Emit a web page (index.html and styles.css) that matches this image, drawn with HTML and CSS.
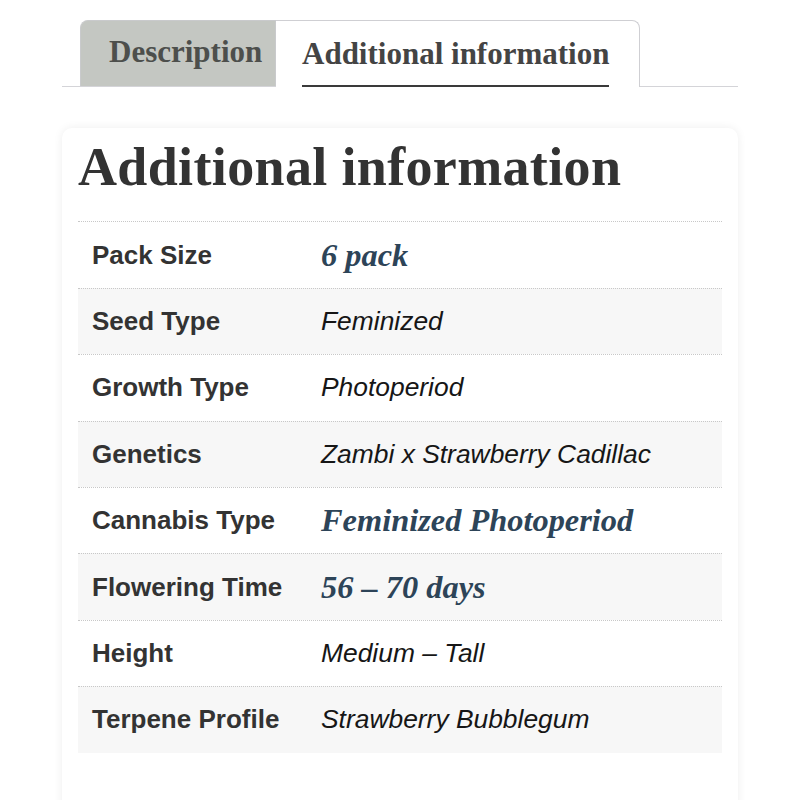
FILE: index.html
```html
<!DOCTYPE html>
<html lang="en">
<head>
<meta charset="utf-8">
<title>Additional information</title>
<link rel="stylesheet" href="styles.css">
</head>
<body>
<div class="tabs">
  <div class="tab tab-inactive"><span class="tab-label">Description</span></div>
  <div class="tab tab-active"><span class="tab-label">Additional information</span></div>
</div>
<section class="card">
  <h2 class="card-title">Additional information</h2>
  <div class="attrs">
    <div class="attr-row"><div class="attr-name">Pack Size</div><div class="attr-value serif">6 pack</div></div>
    <div class="attr-row alt"><div class="attr-name">Seed Type</div><div class="attr-value">Feminized</div></div>
    <div class="attr-row"><div class="attr-name">Growth Type</div><div class="attr-value">Photoperiod</div></div>
    <div class="attr-row alt"><div class="attr-name">Genetics</div><div class="attr-value">Zambi x Strawberry Cadillac</div></div>
    <div class="attr-row"><div class="attr-name">Cannabis Type</div><div class="attr-value serif">Feminized Photoperiod</div></div>
    <div class="attr-row alt"><div class="attr-name">Flowering Time</div><div class="attr-value serif">56 – 70 days</div></div>
    <div class="attr-row"><div class="attr-name">Height</div><div class="attr-value">Medium – Tall</div></div>
    <div class="attr-row alt last"><div class="attr-name">Terpene Profile</div><div class="attr-value">Strawberry Bubblegum</div></div>
  </div>
</section>
</body>
</html>
```

FILE: styles.css
```css
html, body {
  margin: 0;
  padding: 0;
  background: #ffffff;
}

body {
  font-family: "Liberation Sans", Arial, sans-serif;
  color: #333333;
  overflow: hidden;
}

.tabs {
  display: flex;
  margin: 20px 62px 0;
  padding-left: 18px;
  border-bottom: 1px solid #d4d4d8;
  height: 66px;
}

.tab {
  box-sizing: border-box;
  height: 67px;
  display: flex;
  align-items: flex-end;
  font-family: "Liberation Serif", Georgia, serif;
  font-weight: bold;
  font-size: 31px;
}

.tab-label {
  display: block;
  line-height: 36px;
  padding-bottom: 14px;
  border-bottom: 2px solid transparent;
  white-space: nowrap;
}

.tab-inactive {
  width: 196px;
  padding-left: 28px;
  background: #c4c7c2;
  color: #4d4f4c;
  border: 1px solid #c9cacc;
  border-bottom: 0;
  border-radius: 8px 0 0 0;
  height: 66px;
}

.tab-inactive .tab-label {
  padding-bottom: 14px;
}

.tab-active {
  width: 364px;
  padding-left: 26px;
  background: #ffffff;
  color: #444444;
  border: 1px solid #cfcfd3;
  border-bottom: 0;
  border-left: 0;
  border-radius: 0 8px 0 0;
  position: relative;
  z-index: 1;
}

.tab-active .tab-label {
  border-bottom-color: #3a3a3a;
  padding-bottom: 13px;
}

.card {
  margin: 41px 62px 0;
  padding: 10px 16px 80px;
  background: #ffffff;
  border-radius: 10px;
  box-shadow: 0 0 10px rgba(0, 0, 0, 0.07);
}

.card-title {
  margin: 0 0 24px;
  font-family: "Liberation Serif", Georgia, serif;
  font-weight: bold;
  font-size: 54px;
  letter-spacing: 0.35px;
  line-height: 1.1;
  color: #333333;
}

.attrs {
  display: flex;
  flex-direction: column;
}

.attr-row {
  box-sizing: border-box;
  height: 66.4px;
  display: grid;
  grid-template-columns: 243px 1fr;
  align-items: center;
  border-top: 1px dotted #c8c8c8;
}

.attr-row.alt {
  background: #f7f7f7;
}

.attr-name {
  padding-left: 14px;
  font-weight: bold;
  font-size: 26px;
  color: #333333;
}

.attr-value {
  font-style: italic;
  font-size: 26.4px;
  color: #161616;
}

.attr-value.serif {
  font-family: "Liberation Serif", Georgia, serif;
  font-weight: bold;
  font-size: 32.4px;
  color: #2d4458;
}
```
